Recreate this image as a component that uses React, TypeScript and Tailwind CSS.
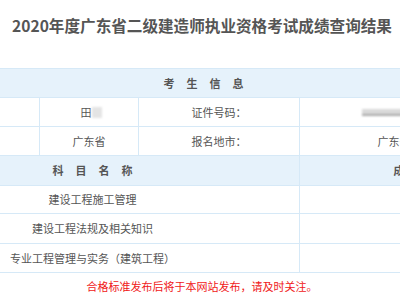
import React from "react";

const cell = "border border-[#d6e9f7] text-center align-middle p-0";

export default function App() {
  return (
    <div className="w-[400px] h-[300px] overflow-hidden bg-white font-['Noto_Sans_CJK_SC','Microsoft_YaHei',sans-serif] text-[#555]">
      <div className="h-[68px] flex items-start justify-center pt-[14px]">
        <h1 className="text-[15.6px] leading-[22px] font-bold text-[#555] whitespace-nowrap ml-[4px]">
          2020年度广东省二级建造师执业资格考试成绩查询结果
        </h1>
      </div>
      <table className="w-[636px] ml-[-115px] border-collapse table-fixed text-[11px]">
        <colgroup>
          <col className="w-[154px]" />
          <col className="w-[99px]" />
          <col className="w-[161px]" />
          <col className="w-[222px]" />
        </colgroup>
        <tbody>
          <tr className="h-[29px] bg-[#e6f2fb]">
            <td colSpan={4} className={`${cell} font-bold tracking-[12px] pl-[12px]`}>
              考生信息
            </td>
          </tr>
          <tr className="h-[29px]">
            <td className={cell}></td>
            <td className={cell}>
              <span className="inline-flex items-center pl-[4px]">
                田
                <span className="inline-block w-[10px] h-[11px] bg-[#e4e4e4] blur-[1px]"></span>
              </span>
            </td>
            <td className={cell}>证件号码：</td>
            <td className={cell}>
              <div className="flex justify-center pl-[20px]">
                <span className="inline-block w-[118px] h-[7px] bg-[#d9d9d9] blur-[1.2px] border-b-2 border-[#aaa]"></span>
              </div>
            </td>
          </tr>
          <tr className="h-[29px]">
            <td className={cell}></td>
            <td className={cell}>广东省</td>
            <td className={cell}>报名地市：</td>
            <td className={cell}>广东省广州市</td>
          </tr>
          <tr className="h-[30px] bg-[#e6f2fb]">
            <td colSpan={3} className={`${cell} font-bold tracking-[12px] pl-[12px]`}>
              科目名称
            </td>
            <td className={`${cell} font-bold tracking-[12px] pl-[12px]`}>成绩</td>
          </tr>
          <tr className="h-[28px]">
            <td colSpan={3} className={cell}>建设工程施工管理</td>
            <td className={cell}></td>
          </tr>
          <tr className="h-[30px]">
            <td colSpan={3} className={cell}>建设工程法规及相关知识</td>
            <td className={cell}></td>
          </tr>
          <tr className="h-[29px]">
            <td colSpan={3} className={cell}>专业工程管理与实务（建筑工程）</td>
            <td className={cell}></td>
          </tr>
        </tbody>
      </table>
      <p className="mt-[5px] text-center text-[11px] leading-[16px] text-[#f01818] pl-[4px]">
        合格标准发布后将于本网站发布，请及时关注。
      </p>
    </div>
  );
}
